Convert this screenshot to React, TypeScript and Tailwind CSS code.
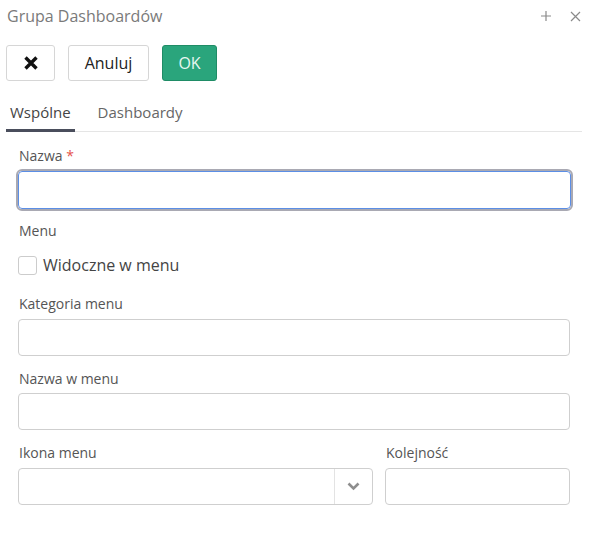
import React from "react";

export default function App() {
  const font = { fontFamily: '"Open Sans", "Liberation Sans", sans-serif' };
  return (
    <div className="w-[592px] h-[544px] bg-white text-[#555]" style={font}>
      <div className="flex items-center justify-between h-[32px] pl-[7px] pr-[11px]">
        <span className="text-[16px] text-[#7a7a7a] leading-none">Grupa Dashboardów</span>
        <div className="flex items-center gap-[18px] text-[#8a8a8a]">
          <svg width="12" height="12" viewBox="0 0 12 12"><path d="M6 1v10M1 6h10" stroke="#8a8a8a" strokeWidth="1.2" /></svg>
          <svg width="11" height="11" viewBox="0 0 11 11"><path d="M1 1l9 9M10 1l-9 9" stroke="#8a8a8a" strokeWidth="1.2" /></svg>
        </div>
      </div>
      <div className="flex gap-[13px] pl-[6px] mt-[13px]">
        <button className="w-[49px] h-[36px] border border-[#d6d6d6] rounded-[3px] bg-white flex items-center justify-center">
          <svg width="16" height="16" viewBox="0 0 16 16"><path d="M2.5 2.5l11 11M13.5 2.5l-11 11" stroke="#111" strokeWidth="3.4" /></svg>
        </button>
        <button className="w-[81px] h-[36px] border border-[#d6d6d6] rounded-[3px] bg-white text-[16px] text-[#222]">Anuluj</button>
        <button className="w-[55px] h-[36px] border border-[#1f8c66] rounded-[3px] bg-[#2aa57c] text-[16px] text-[#e8f7f1]">OK</button>
      </div>
      <div className="flex mx-[6px] mt-[20px] border-b border-[#e5e5e5] w-[576px]">
        <div className="px-[4px] pb-[6px] text-[15px] text-[#444] border-b-[3px] border-[#4a4e5c] -mb-[1px] leading-[22px]">Wspólne</div>
        <div className="ml-[23px] text-[15px] text-[#666] leading-[22px]">Dashboardy</div>
      </div>
      <div className="px-[18px] pt-[14px] flex flex-col">
        <label className="text-[14px] leading-[20px] pl-[1px] text-[#555]">Nazwa <span className="text-[#e5534b]">*</span></label>
        <div className="mt-[5px] h-[38px] w-[553px] rounded-[4px] border border-[#5b8ee6] outline-2 outline-[#a9a9b3] bg-white" />
        <div className="text-[14px] leading-[20px] mt-[12px] pl-[1px]">Menu</div>
        <div className="flex items-center mt-[13px]">
          <div className="w-[19px] h-[19px] border border-[#ccc] rounded-[3px] bg-white" />
          <span className="ml-[6px] text-[16px] text-[#444] leading-[22px]">Widoczne w menu</span>
        </div>
        <label className="text-[14px] leading-[20px] mt-[18px] pl-[1px]">Kategoria menu</label>
        <div className="mt-[5px] h-[37px] w-[552px] rounded-[4px] border border-[#cfcfcf] bg-white" />
        <label className="text-[14px] leading-[20px] mt-[13px] pl-[1px]">Nazwa w menu</label>
        <div className="mt-[4px] h-[37px] w-[552px] rounded-[4px] border border-[#cfcfcf] bg-white" />
        <div className="flex gap-[12px] mt-[13px]">
          <div className="flex flex-col">
            <label className="text-[14px] leading-[20px] pl-[1px]">Ikona menu</label>
            <div className="mt-[5px] h-[37px] w-[355px] rounded-[4px] border border-[#cfcfcf] bg-white flex">
              <div className="flex-1" />
              <div className="w-[38px] border-l border-[#e3e3e3] flex items-center justify-center">
                <svg width="13" height="9" viewBox="0 0 13 9"><path d="M1.5 1.5l5 5 5-5" stroke="#8e8e8e" strokeWidth="2.6" fill="none" /></svg>
              </div>
            </div>
          </div>
          <div className="flex flex-col">
            <label className="text-[14px] leading-[20px] pl-[1px]">Kolejność</label>
            <div className="mt-[5px] h-[37px] w-[185px] rounded-[4px] border border-[#cfcfcf] bg-white" />
          </div>
        </div>
      </div>
    </div>
  );
}
